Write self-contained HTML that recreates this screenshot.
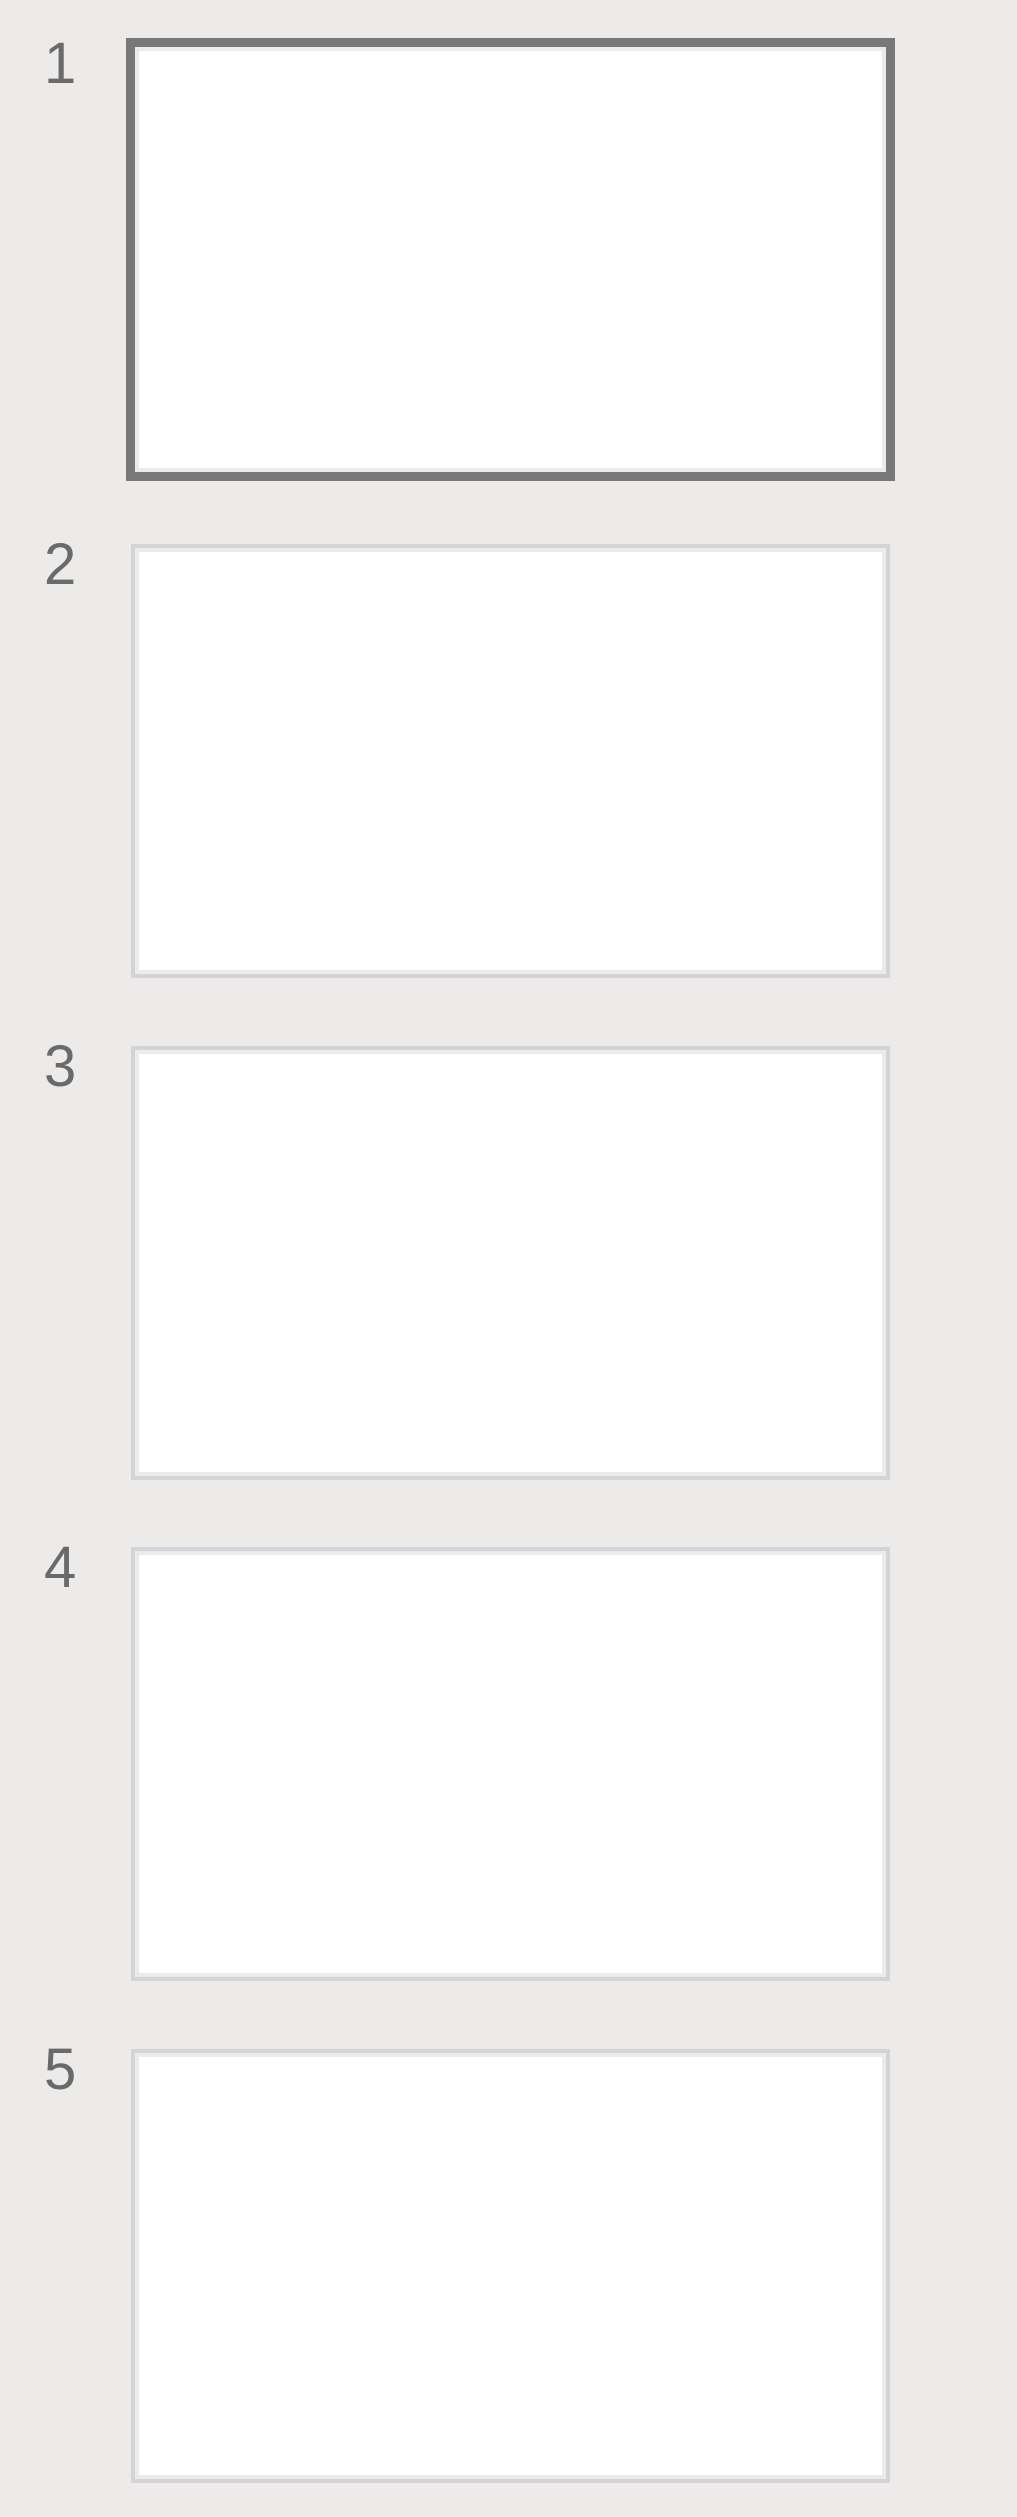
<!DOCTYPE html>
<html><head><meta charset="utf-8"><style>
html,body{margin:0;padding:0;}
body{width:1017px;height:2517px;background:#ecebe9;position:relative;overflow:hidden;font-family:"Liberation Sans",sans-serif;}
.s{position:absolute;left:131px;width:751px;height:426px;border:4px solid #d4d3d8;background:#fff;box-shadow:inset 0 0 0 4px #ebebeb;}
.s.a{left:126px;width:751px;height:425px;border:9px solid #787878;}
.n{position:absolute;left:44px;font-size:58px;line-height:58px;color:#6a6a6a;}
</style></head><body>
<div class="s a" style="top:38px"></div>
<div class="s" style="top:544px"></div>
<div class="s" style="top:1046px"></div>
<div class="s" style="top:1547px"></div>
<div class="s" style="top:2049px"></div>
<div class="n" style="top:35px;left:44px">1</div>
<div class="n" style="top:536px">2</div>
<div class="n" style="top:1038px">3</div>
<div class="n" style="top:1539px">4</div>
<div class="n" style="top:2041px">5</div>
</body></html>
